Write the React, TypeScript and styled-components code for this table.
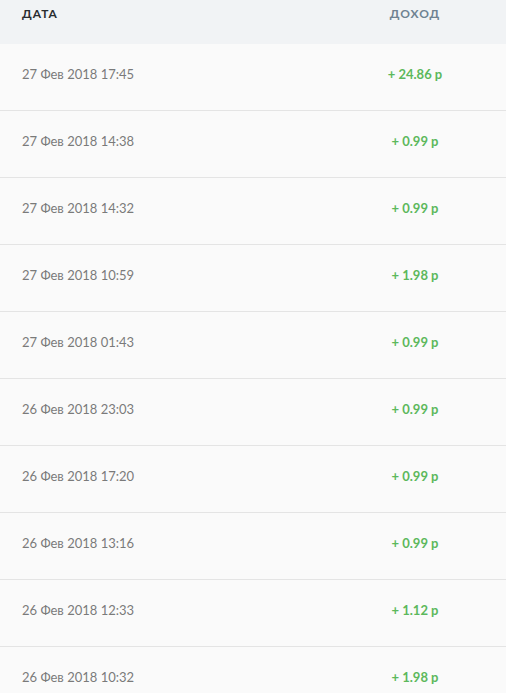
import * as React from 'react'
import styled, { createGlobalStyle } from 'styled-components'

const Global = createGlobalStyle`
  html, body {
    margin: 0;
    padding: 0;
    background: #fafafa;
  }
  body {
    font-family: Lato, "Open Sans", sans-serif;
  }
`

const Table = styled.div`
  width: 506px;
  height: 693px;
  overflow: hidden;
  background: #fafafa;
`

const Head = styled.div`
  display: grid;
  grid-template-columns: 1fr 100px;
  height: 44px;
  padding: 6px 41px 0 22px;
  box-sizing: border-box;
  background: #f1f3f5;
`

const HeadCell = styled.div<{ $align?: 'left' | 'center'; $muted?: boolean }>`
  font-size: 12px;
  font-weight: 700;
  letter-spacing: 1px;
  line-height: 16px;
  text-align: ${p => p.$align || 'left'};
  color: ${p => (p.$muted ? '#6f8291' : '#2a2d30')};
`

const Row = styled.div`
  display: grid;
  grid-template-columns: 1fr 100px;
  align-items: start;
  height: 67px;
  padding: 22px 41px 0 22px;
  box-sizing: border-box;
  border-bottom: 1px solid #e4e4e4;
`

const DateCell = styled.div`
  font-size: 13px;
  line-height: 16px;
  color: #7a7a7a;
`

const Amount = styled.div`
  font-size: 13px;
  font-weight: 700;
  line-height: 16px;
  text-align: center;
  color: #5cb85c;
`

const rows: [string, string][] = [
  ['27 Фев 2018 17:45', '+ 24.86 р'],
  ['27 Фев 2018 14:38', '+ 0.99 р'],
  ['27 Фев 2018 14:32', '+ 0.99 р'],
  ['27 Фев 2018 10:59', '+ 1.98 р'],
  ['27 Фев 2018 01:43', '+ 0.99 р'],
  ['26 Фев 2018 23:03', '+ 0.99 р'],
  ['26 Фев 2018 17:20', '+ 0.99 р'],
  ['26 Фев 2018 13:16', '+ 0.99 р'],
  ['26 Фев 2018 12:33', '+ 1.12 р'],
  ['26 Фев 2018 10:32', '+ 1.98 р'],
]

export default function App() {
  return (
    <Table>
      <Global />
      <Head>
        <HeadCell>ДАТА</HeadCell>
        <HeadCell $align="center" $muted>
          ДОХОД
        </HeadCell>
      </Head>
      {rows.map(([date, sum]) => (
        <Row key={date}>
          <DateCell>{date}</DateCell>
          <Amount>{sum}</Amount>
        </Row>
      ))}
    </Table>
  )
}
